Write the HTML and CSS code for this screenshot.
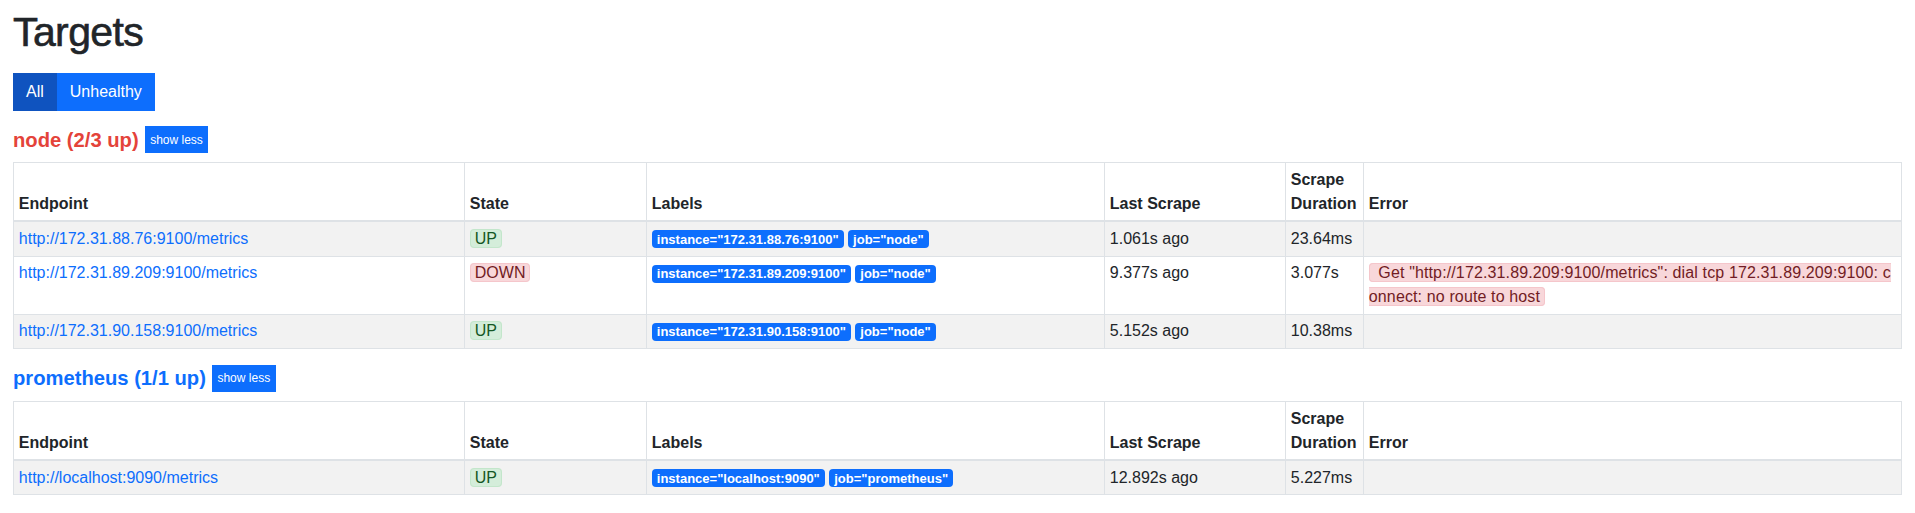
FILE: index.html
```html
<!DOCTYPE html>
<html lang="en">
<head>
<meta charset="utf-8">
<title>Targets</title>
<link rel="stylesheet" href="styles.css">
</head>
<body>
<main class="page">
  <h1 class="page-title">Targets</h1>
  <div class="btn-group">
    <button type="button" class="btn btn-active">All</button><button type="button" class="btn">Unhealthy</button>
  </div>

  <section class="pool">
    <div class="pool-head">
      <a class="pool-name pool-name-danger" href="#job-node">node (2/3 up)</a>
      <button type="button" class="btn-toggle">show less</button>
    </div>
    <table class="targets">
      <colgroup>
        <col class="c-endpoint"><col class="c-state"><col class="c-labels"><col class="c-last"><col class="c-dur"><col>
      </colgroup>
      <thead>
        <tr><th>Endpoint</th><th>State</th><th>Labels</th><th>Last Scrape</th><th>Scrape Duration</th><th>Error</th></tr>
      </thead>
      <tbody>
        <tr>
          <td><a href="#">http://172.31.88.76:9100/metrics</a></td>
          <td><span class="state state-up">UP</span></td>
          <td><span class="label">instance="172.31.88.76:9100"</span> <span class="label">job="node"</span></td>
          <td>1.061s ago</td>
          <td>23.64ms</td>
          <td></td>
        </tr>
        <tr>
          <td><a href="#">http://172.31.89.209:9100/metrics</a></td>
          <td><span class="state state-down">DOWN</span></td>
          <td><span class="label">instance="172.31.89.209:9100"</span> <span class="label">job="node"</span></td>
          <td>9.377s ago</td>
          <td>3.077s</td>
          <td class="error-cell"><span class="state state-down error-text">&nbsp;Get "http://172.31.89.209:9100/metrics": dial tcp 172.31.89.209:9100: connect: no route to host</span></td>
        </tr>
        <tr>
          <td><a href="#">http://172.31.90.158:9100/metrics</a></td>
          <td><span class="state state-up">UP</span></td>
          <td><span class="label">instance="172.31.90.158:9100"</span> <span class="label">job="node"</span></td>
          <td>5.152s ago</td>
          <td>10.38ms</td>
          <td></td>
        </tr>
      </tbody>
    </table>
  </section>

  <section class="pool">
    <div class="pool-head">
      <a class="pool-name" href="#job-prometheus">prometheus (1/1 up)</a>
      <button type="button" class="btn-toggle">show less</button>
    </div>
    <table class="targets">
      <colgroup>
        <col class="c-endpoint"><col class="c-state"><col class="c-labels"><col class="c-last"><col class="c-dur"><col>
      </colgroup>
      <thead>
        <tr><th>Endpoint</th><th>State</th><th>Labels</th><th>Last Scrape</th><th>Scrape Duration</th><th>Error</th></tr>
      </thead>
      <tbody>
        <tr>
          <td><a href="#">http://localhost:9090/metrics</a></td>
          <td><span class="state state-up">UP</span></td>
          <td><span class="label">instance="localhost:9090"</span> <span class="label">job="prometheus"</span></td>
          <td>12.892s ago</td>
          <td>5.227ms</td>
          <td></td>
        </tr>
      </tbody>
    </table>
  </section>
</main>
</body>
</html>
```

FILE: styles.css
```css
* { box-sizing: border-box; }

body {
  margin: 0;
  font-family: "Liberation Sans", Arial, sans-serif;
  font-size: 16px;
  line-height: 1.5;
  color: #212529;
  background: #fff;
}

.page {
  padding: 8px 13px 0;
}

.page-title {
  margin: 0 0 16px;
  font-size: 41px;
  font-weight: 500;
  line-height: 1.2;
  letter-spacing: -0.6px;
  -webkit-text-stroke: 0.6px #212529;
}

.btn-group {
  display: inline-flex;
}

.btn {
  margin: 0;
  padding: 6px 12px;
  font: inherit;
  font-size: 16px;
  line-height: 24px;
  color: #fff;
  background: #0d6efd;
  border: 1px solid #0d6efd;
  border-radius: 0;
}

.btn-active {
  background: #0f53bf;
  border-color: #0f53bf;
}

.pool {
  margin-top: 15px;
}

.pool + .pool {
  margin-top: 16px;
}

.pool-head {
  display: flex;
  align-items: center;
  gap: 6px;
  margin-bottom: 9px;
}

.pool-name {
  font-size: 20.2px;
  font-weight: 700;
  line-height: 1.2;
  color: #0d6efd;
  text-decoration: none;
}

.pool-name-danger {
  color: #e4433a;
}

.btn-toggle {
  margin: 0;
  padding: 3.5px 4.5px;
  font: inherit;
  font-size: 12px;
  line-height: 18px;
  color: #fff;
  background: #0d6efd;
  border: 1px solid #0d6efd;
  border-radius: 0;
}

.targets {
  width: 100%;
  table-layout: fixed;
  border-collapse: collapse;
  border: 1px solid #dee2e6;
}

.c-endpoint { width: 451px; }
.c-state { width: 182px; }
.c-labels { width: 458px; }
.c-last { width: 181px; }
.c-dur { width: 78px; }

.targets th,
.targets td {
  padding: 4.6px 4.8px;
  border: 1px solid #dee2e6;
  text-align: left;
  vertical-align: top;
}

.targets th {
  vertical-align: bottom;
  border-bottom-width: 2px;
  font-weight: 700;
}

.targets tbody tr:nth-child(odd) {
  background: #f2f2f2;
}

.targets a {
  color: #0d6efd;
  text-decoration: none;
}

.state {
  padding: 0 4px;
  border: 1px solid;
  border-radius: 4px;
}

.state-up {
  color: #155724;
  background: #d4edda;
  border-color: #c3e6cb;
}

.state-down {
  color: #721c24;
  background: #f8d7da;
  border-color: #f5c6cb;
}

.error-cell {
  word-break: break-all;
}

.error-text {
  letter-spacing: 0.13px;
}

.label {
  display: inline-block;
  padding: 2.5px 5px;
  font-size: 13px;
  font-weight: 700;
  line-height: 1;
  color: #fff;
  background: #0d6efd;
  border-radius: 4px;
  white-space: nowrap;
}
```
